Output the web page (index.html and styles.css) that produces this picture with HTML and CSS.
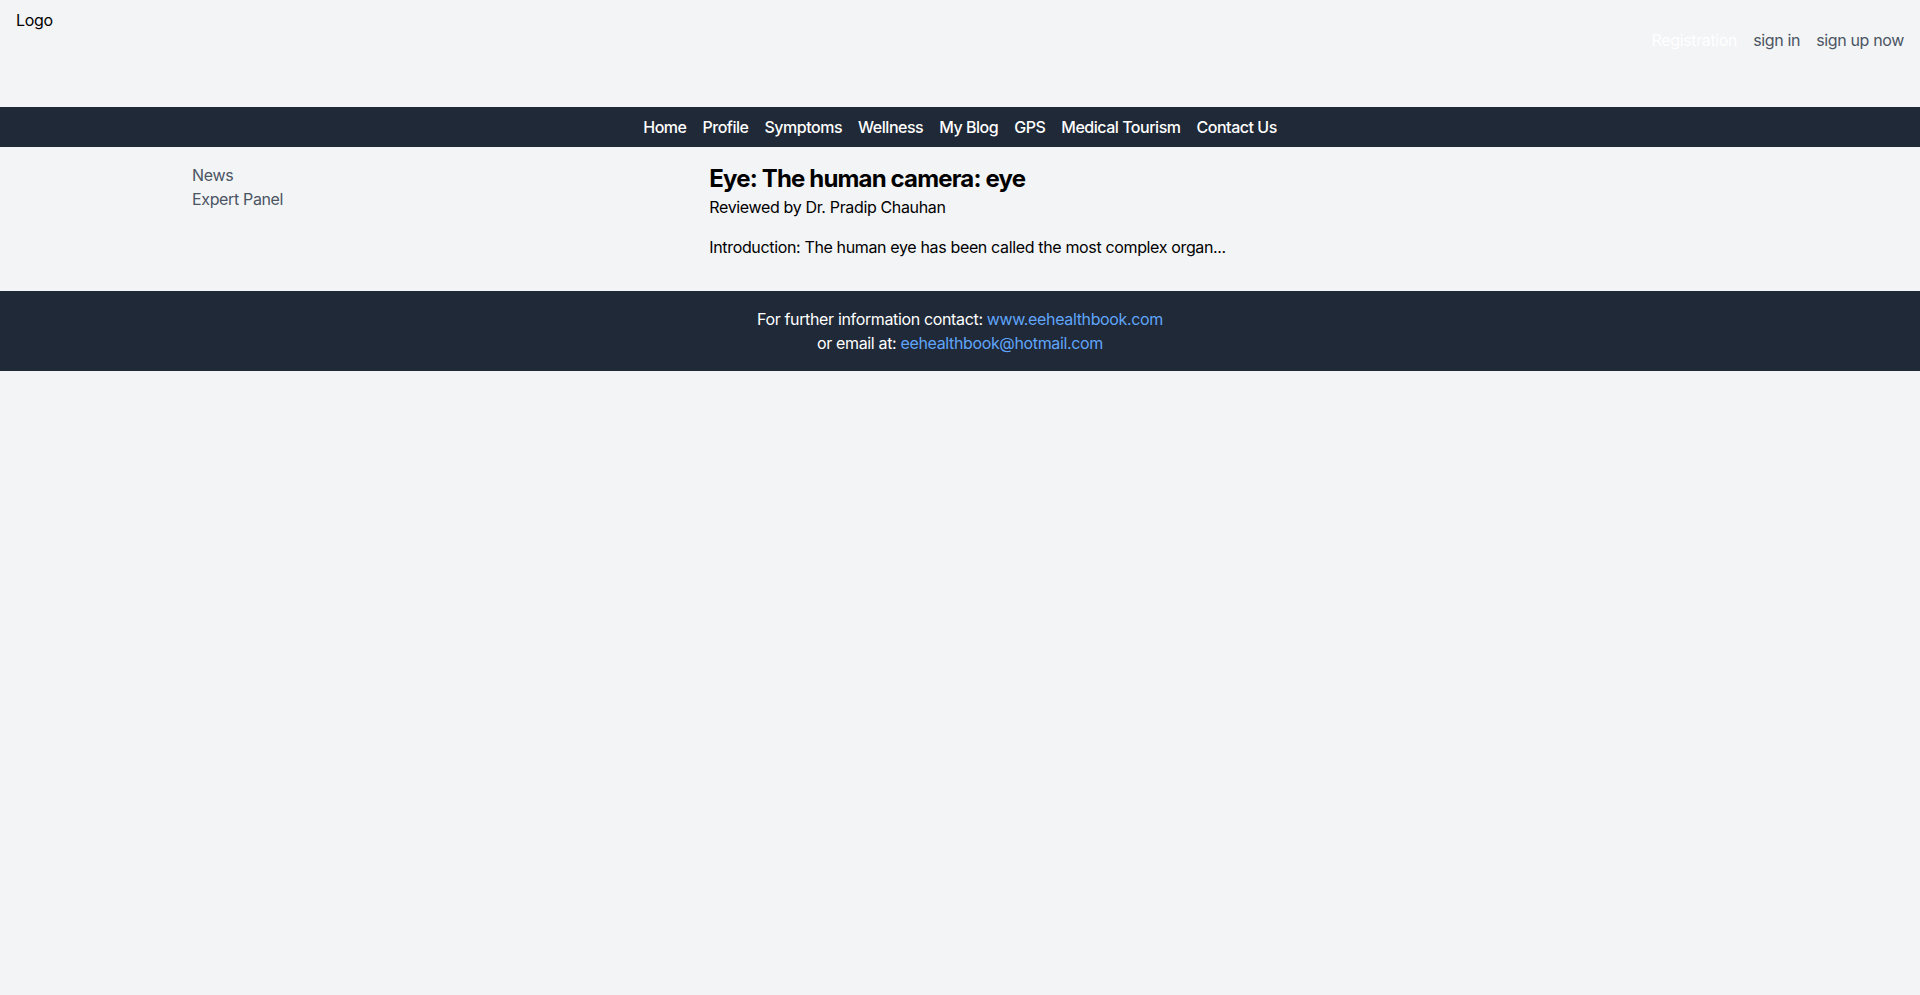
FILE: index.html
```html
<!DOCTYPE html>
<html lang="en">
<head>
<meta charset="utf-8">
<title>eehealthbook</title>
<link rel="stylesheet" href="styles.css">
</head>
<body>
<header class="site-header">
  <div class="logo">Logo</div>
  <nav class="account-links">
    <a class="registration" href="#">Registration</a>
    <a class="account-link" href="#">sign in</a>
    <a class="account-link" href="#">sign up now</a>
  </nav>
</header>
<nav class="main-nav">
  <a href="#">Home</a>
  <a href="#">Profile</a>
  <a href="#">Symptoms</a>
  <a href="#">Wellness</a>
  <a href="#">My Blog</a>
  <a href="#">GPS</a>
  <a href="#">Medical Tourism</a>
  <a href="#">Contact Us</a>
</nav>
<div class="container">
  <aside class="sidebar">
    <a href="#">News</a>
    <a href="#">Expert Panel</a>
  </aside>
  <main class="article">
    <h1 class="article-title">Eye: The human camera: eye</h1>
    <p class="reviewer">Reviewed by Dr. Pradip Chauhan</p>
    <p class="intro">Introduction: The human eye has been called the most complex organ...</p>
  </main>
</div>
<footer class="site-footer">
  <p>For further information contact: <a href="#">www.eehealthbook.com</a></p>
  <p>or email at: <a href="#">eehealthbook@hotmail.com</a></p>
</footer>
</body>
</html>
```
FILE: styles.css
```css
* { box-sizing: border-box; }
html, body { margin: 0; padding: 0; }
body {
  background: #f3f4f6;
  font-family: Inter, "Noto Sans", "Liberation Sans", sans-serif;
  font-size: 16px;
  line-height: 24px;
  letter-spacing: -0.022em;
  color: #000;
}
a { text-decoration: none; }
p { margin: 0; }

.site-header {
  height: 107px;
  padding: 8px 16px;
  display: flex;
  justify-content: space-between;
  align-items: flex-start;
}
.logo { color: #000; }
.account-links {
  margin-top: 20px;
  display: flex;
  gap: 16px;
}
.registration { color: #ffffff; }
.account-link { color: #4b5563; }

.main-nav {
  background: #1f2937;
  height: 40px;
  display: flex;
  justify-content: center;
  align-items: center;
  gap: 16px;
}
.main-nav a {
  color: #ffffff;
  font-weight: 500;
  letter-spacing: -0.03em;
}

.container {
  max-width: 1536px;
  margin: 0 auto;
  display: grid;
  grid-template-columns: repeat(3, 1fr);
  column-gap: 16px;
  padding: 16px 0 32px;
}
.sidebar {
  display: flex;
  flex-direction: column;
}
.sidebar a { color: #4b5563; }
.article { grid-column: span 2; }
.article-title {
  margin: 0;
  font-size: 24px;
  line-height: 32px;
  font-weight: 700;
  letter-spacing: -0.035em;
}
.intro { margin-top: 16px; }

.site-footer {
  background: #1f2937;
  color: #ffffff;
  text-align: center;
  padding: 16px;
}
.site-footer a { color: #60a5fa; }
```
